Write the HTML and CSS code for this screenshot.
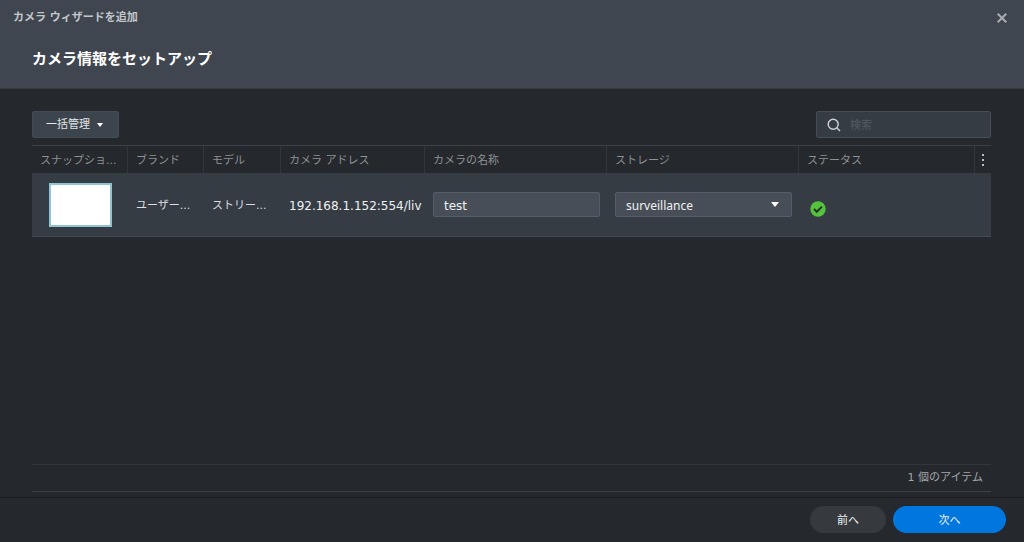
FILE: index.html
```
<!DOCTYPE html>
<html lang="ja">
<head>
<meta charset="utf-8">
<title>カメラ ウィザードを追加</title>
<link rel="stylesheet" href="styles.css">
</head>
<body>
<div class="wizard">
  <header class="head">
    <div class="titlebar">
      <span class="title">カメラ ウィザードを追加</span>
      <button class="close" type="button" aria-label="閉じる">
        <svg width="10" height="10" viewBox="0 0 10 10"><path d="M.7 .7l8.6 8.6M9.3 .7l-8.6 8.6" stroke="currentColor" stroke-width="2" fill="none"/></svg>
      </button>
    </div>
    <h1 class="heading">カメラ情報をセットアップ</h1>
  </header>

  <main class="content">
    <div class="toolbar">
      <button class="bulk" type="button">一括管理
        <svg width="6" height="4" viewBox="0 0 6 4"><path d="M0 0h6L3 4z" fill="#fff"/></svg>
      </button>
      <label class="search">
        <svg width="14" height="14" viewBox="0 0 14 14" fill="none" stroke="#d0d3d6" stroke-width="1.4"><circle cx="6.2" cy="6.2" r="5"/><path d="M9.8 9.8l3.2 3.2"/></svg>
        <input class="search-input" type="search" placeholder="検索" aria-label="検索">
      </label>
    </div>

    <table class="grid">
      <colgroup>
        <col class="c-snap"><col class="c-brand"><col class="c-model"><col class="c-addr"><col class="c-name"><col class="c-store"><col><col class="c-menu">
      </colgroup>
      <thead>
        <tr>
          <th>スナップショ...</th><th>ブランド</th><th>モデル</th><th>カメラ アドレス</th><th>カメラの名称</th><th>ストレージ</th><th>ステータス</th>
          <th class="menu"><button class="more" type="button" aria-label="列"><svg width="2" height="12" viewBox="0 0 2 12" fill="#b9bcbf"><path d="M0 0h2v2H0zM0 5h2v2H0zM0 10h2v2H0z"/></svg></button></th>
        </tr>
      </thead>
      <tbody>
        <tr>
          <td class="snap"><div class="thumb"></div></td>
          <td class="text">ユーザー...</td>
          <td class="text">ストリー...</td>
          <td class="addr">192.168.1.152:554/liv</td>
          <td><input class="field" type="text" value="test" aria-label="カメラの名称"></td>
          <td><select class="field select" aria-label="ストレージ"><option>surveillance</option></select></td>
          <td class="status"><svg width="16" height="16" viewBox="0 0 16 16" role="img" aria-label="正常"><circle cx="8" cy="8" r="7.7" fill="#55c43c"/><path d="M4 8l2.8 2.8L12 5.6" fill="none" stroke="#26312c" stroke-width="2"/></svg></td>
          <td></td>
        </tr>
      </tbody>
    </table>

    <div class="summary">1 個のアイテム</div>
  </main>

  <footer class="actions">
    <button class="btn prev" type="button">前へ</button>
    <button class="btn next" type="button">次へ</button>
  </footer>
</div>
</body>
</html>
```
FILE: styles.css
```
* { box-sizing: border-box; }

body {
  margin: 0;
  background: #25282d;
  color: #dcdee0;
  font: 11px/16px "DejaVu Sans", "Noto Sans CJK JP", sans-serif;
}

button, input, select { font: inherit; color: inherit; }
button { cursor: pointer; }

.wizard { display: flex; flex-direction: column; min-height: 100vh; }

.head { background: #3f464f; padding-bottom: 17px; border-bottom: 1px solid #353b43; }
.titlebar { display: flex; align-items: center; justify-content: space-between; padding: 9px 17px 0 13px; }
.title { padding-top: 1px; font-weight: 700; color: #c4c8cc; }
.close { display: flex; padding: 0; border: 0; background: none; color: #a9adb2; }
.heading { margin: 22px 32px 0; font-size: 15px; line-height: 23px; font-weight: 700; color: #fff; }

.content { flex: 1; display: flex; flex-direction: column; padding: 22px 33px 5px 32px; }

.toolbar { display: flex; justify-content: space-between; margin-bottom: 7px; }
.bulk {
  display: flex; align-items: center; gap: 7px; height: 27px; padding: 1px 15px 0 13px;
  border: 1px solid #434b54; border-radius: 2px; background: #3c444d; color: #e4e6e8;
}
.search {
  display: flex; align-items: center; gap: 9px; width: 175px; height: 27px; padding: 0 10px;
  border: 1px solid #454d56; border-radius: 2px; background: #363c44;
}
.search-input { flex: 1; min-width: 0; padding: 2px 0 0; border: 0; outline: 0; background: none; }
.search-input::placeholder { color: #555b63; opacity: 1; }

.grid { width: 100%; table-layout: fixed; border-collapse: separate; border-spacing: 0; border-top: 1px solid #3d4248; }
.c-snap { width: 96px; }
.c-brand { width: 76px; }
.c-model { width: 77px; }
.c-addr { width: 144px; }
.c-name { width: 182px; }
.c-store { width: 192px; }
.c-menu { width: 16px; }

.grid th, .grid td { white-space: nowrap; text-align: left; }
.grid th { height: 27px; padding: 2px 0 0 8px; border-right: 1px solid #33373c; font-weight: 400; color: #8f9295; }
.grid td { height: 64px; padding: 0 7px 0 8px; border-bottom: 1px solid #434a52; background: #363c44; }
.grid .menu { padding: 0; border-right: 0; }
.more { display: flex; justify-content: center; width: 100%; padding: 0; border: 0; background: none; }
.grid .snap { padding: 0 16px 0 17px; }
.thumb { height: 44px; border: 2px solid #8ec5d4; background: #fff; }
.grid .text { padding-top: 3px; }
.grid .addr { padding-top: 2px; padding-right: 0; font-size: 12px; color: #f0f1f2; }
.grid .status { padding: 8px 0 0 11px; }
.status svg { display: block; }

.field {
  display: block; width: 100%; height: 25px; padding: 2px 10px 0; border: 1px solid #555d66; border-radius: 2px;
  background: #474e57; font-size: 12px; color: #f0f1f2;
}
.select {
  appearance: none;
  font-family: "Noto Sans", "Noto Sans CJK JP", sans-serif;
  background: #474e57 url("data:image/svg+xml,%3Csvg xmlns='http://www.w3.org/2000/svg' width='8' height='5'%3E%3Cpath d='M0 0h8L4 5z' fill='%23fff'/%3E%3C/svg%3E") no-repeat right 12px center;
}

.summary { margin-top: auto; padding: 5px 8px; border-top: 1px solid #33373c; border-bottom: 1px solid #3d4146; text-align: right; color: #a3a6a9; }

.actions { display: flex; justify-content: flex-end; gap: 7px; padding: 8px 18px 9px; border-top: 1px solid #1a1c1f; }
.btn { height: 27px; padding: 2px 0 0; border: 0; border-radius: 14px; color: #f0f1f2; }
.prev { width: 76px; background: #36393e; }
.next { width: 113px; background: #0077df; }
```
